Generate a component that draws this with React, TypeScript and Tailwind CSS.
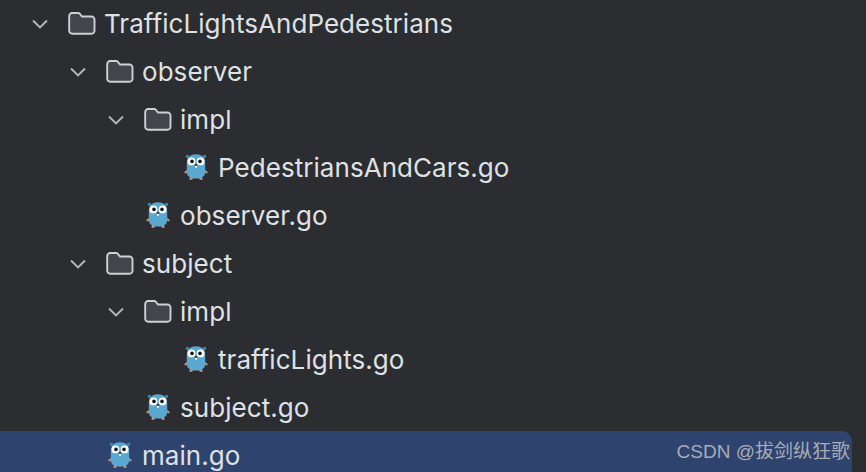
import React from "react";

function Chevron() {
  return (
    <svg width="18" height="18" viewBox="0 0 18 18" fill="none" className="shrink-0">
      <path d="M2 5.5 L9 12.5 L16 5.5" stroke="#b4b8bf" strokeWidth="1.9" />
    </svg>
  );
}

function Folder() {
  return (
    <svg width="28" height="24" viewBox="0 0 28 24" fill="none" className="shrink-0">
      <path
        d="M1.2 4 a3 3 0 0 1 3 -3 h6 a2 2 0 0 1 1.5 .7 l2.3 2.8 h9.5 a3 3 0 0 1 3 3 v11.3 a3 3 0 0 1 -3 3 h-19.3 a3 3 0 0 1 -3 -3 z"
        fill="#43454a"
        stroke="#ced0d6"
        strokeWidth="1.9"
      />
    </svg>
  );
}

function Gopher() {
  return (
    <svg width="26" height="30" viewBox="0 0 26 30" className="shrink-0">
      <path d="M3.5 17 L1 19.5 L2.5 20.5 L4.5 19Z M22.5 17 L25 19.5 L23.5 20.5 L21.5 19Z" fill="#c79a85" />
      <path d="M7 23.5 L6.5 27 L9.5 26.5 L10 24.5Z M19 23.5 L19.5 27 L16.5 26.5 L16 24.5Z" fill="#c79a85" />
      <circle cx="4.5" cy="3.5" r="1.8" fill="#3b86a8" />
      <circle cx="21.5" cy="3.5" r="1.8" fill="#3b86a8" />
      <path d="M3.8 10 C3.8 4 7.5 1.2 13 1.2 C18.5 1.2 22.2 4 22.2 10 L22.2 19 C22.2 23.5 18.5 25.5 13 25.5 C7.5 25.5 3.8 23.5 3.8 19 Z" fill="#5aa7d2" />
      <circle cx="8.4" cy="8.4" r="3.9" fill="#fff" />
      <circle cx="17.6" cy="8.4" r="3.9" fill="#fff" />
      <circle cx="9" cy="8.4" r="1.8" fill="#111" />
      <circle cx="17" cy="8.4" r="1.8" fill="#111" />
      <ellipse cx="13" cy="12" rx="1.4" ry="0.9" fill="#2b2b2b" />
      <rect x="12" y="12.8" width="2" height="2.2" fill="#f4e3da" />
    </svg>
  );
}

function Label({ children }: { children: React.ReactNode }) {
  return <span className="text-[26px] tracking-[0.05px] leading-[48px] text-[#dfe1e5] whitespace-nowrap">{children}</span>;
}

function FolderRow({ pad, name }: { pad: string; name: string }) {
  return (
    <div className={`flex h-12 items-center ${pad}`}>
      <Chevron />
      <div className="ml-[19px] mr-[8px] flex"><Folder /></div>
      <Label>{name}</Label>
    </div>
  );
}

function FileRow({ pad, name }: { pad: string; name: string }) {
  return (
    <div className={`flex h-12 items-center ${pad}`}>
      <Gopher />
      <div className="ml-[9px]"><Label>{name}</Label></div>
    </div>
  );
}

export default function App() {
  return (
    <div className="relative h-[472px] w-[866px] overflow-hidden bg-[#2b2d30] font-['Inter',sans-serif]">
      <FolderRow pad="pl-[31px]" name="TrafficLightsAndPedestrians" />
      <FolderRow pad="pl-[69px]" name="observer" />
      <FolderRow pad="pl-[107px]" name="impl" />
      <FileRow pad="pl-[183px]" name="PedestriansAndCars.go" />
      <FileRow pad="pl-[145px]" name="observer.go" />
      <FolderRow pad="pl-[69px]" name="subject" />
      <FolderRow pad="pl-[107px]" name="impl" />
      <FileRow pad="pl-[183px]" name="trafficLights.go" />
      <FileRow pad="pl-[145px]" name="subject.go" />
      <div className="-mt-px flex h-[49px] w-[852px] items-center rounded-tr-[10px] bg-[#2e436e] pl-[107px] pt-px">
        <Gopher />
        <div className="ml-[9px]"><Label>main.go</Label></div>
      </div>
      <div className="absolute right-[16px] top-[440px] text-[19px] leading-[24px] text-[#a9adb5] font-['Liberation_Sans','Noto_Sans_CJK_SC',sans-serif] whitespace-nowrap">
        CSDN @拔剑纵狂歌
      </div>
    </div>
  );
}
